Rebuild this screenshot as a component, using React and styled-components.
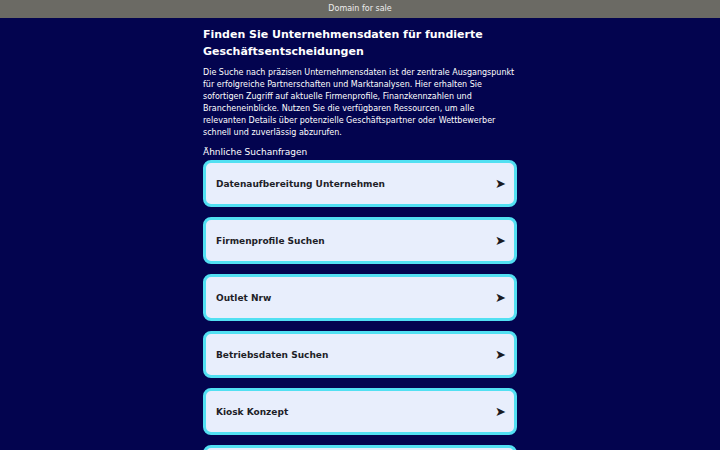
import React from "react";
import styled, { createGlobalStyle } from "styled-components";

const GlobalStyle = createGlobalStyle`
  html, body {
    margin: 0;
    padding: 0;
    background: #03044f;
    font-family: "DejaVu Sans", Verdana, sans-serif;
  }
`;

const TopBar = styled.div`
  height: 18px;
  background: #6b6a64;
  color: #eeeeee;
  font-size: 8px;
  line-height: 18px;
  text-align: center;
`;

const Main = styled.main`
  width: 314px;
  margin: 0 auto;
  padding-top: 7.5px;
  color: #ffffff;
`;

const Title = styled.h1`
  font-size: 11px;
  line-height: 17px;
  font-weight: bold;
  margin: 0 0 7.5px;
`;

const Intro = styled.p`
  font-size: 8px;
  line-height: 12px;
  margin: 0 0 6.5px;
`;

const Related = styled.h2`
  font-size: 9px;
  font-weight: normal;
  line-height: 13px;
  margin: 0 0 1.5px;
`;

const List = styled.div`
  display: flex;
  flex-direction: column;
  gap: 10px;
`;

const Card = styled.a`
  display: flex;
  align-items: center;
  justify-content: space-between;
  height: 41px;
  padding: 0 8px 0 10px;
  background: #e8eefc;
  border: 3px solid #52e0f2;
  border-radius: 8px;
  color: #1e1e28;
  font-size: 9px;
  font-weight: bold;
  text-decoration: none;
`;

const Arrow = styled.span`
  font-size: 13px;
  color: #1a1a22;
`;

const items = [
  "Datenaufbereitung Unternehmen",
  "Firmenprofile Suchen",
  "Outlet Nrw",
  "Betriebsdaten Suchen",
  "Kiosk Konzept",
  "Firmendaten",
];

export default function App() {
  return (
    <>
      <GlobalStyle />
      <TopBar>Domain for sale</TopBar>
      <Main>
        <Title>Finden Sie Unternehmensdaten für fundierte Geschäftsentscheidungen</Title>
        <Intro>
          Die Suche nach präzisen Unternehmensdaten ist der zentrale Ausgangspunkt
          für erfolgreiche Partnerschaften und Marktanalysen. Hier erhalten Sie
          sofortigen Zugriff auf aktuelle Firmenprofile, Finanzkennzahlen und
          Brancheneinblicke. Nutzen Sie die verfügbaren Ressourcen, um alle
          relevanten Details über potenzielle Geschäftspartner oder Wettbewerber
          schnell und zuverlässig abzurufen.
        </Intro>
        <Related>Ähnliche Suchanfragen</Related>
        <List>
          {items.map((t) => (
            <Card href="#" key={t}>
              {t}
              <Arrow>➤</Arrow>
            </Card>
          ))}
        </List>
      </Main>
    </>
  );
}
